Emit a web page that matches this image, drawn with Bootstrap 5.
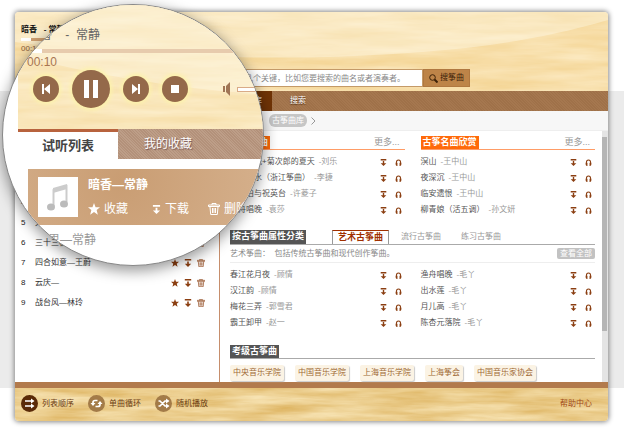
<!DOCTYPE html>
<html lang="zh-CN">
<head>
<meta charset="utf-8">
<meta name="viewport" content="width=device-width, initial-scale=1">
<title>古筝曲库</title>
<link href="https://cdn.jsdelivr.net/npm/bootstrap@5.3.0/dist/css/bootstrap.min.css" rel="stylesheet">
<script src="https://cdn.jsdelivr.net/npm/bootstrap@5.3.0/dist/js/bootstrap.bundle.min.js" defer></script>
<style>
body{font:8px/16px "Liberation Sans","Noto Sans CJK SC",sans-serif;color:#555;background:linear-gradient(#fff 91px,#ebebeb 91px,#ebebeb 388px,#fff 388px)}
a{color:inherit;text-decoration:none}
button{font:inherit;color:inherit;border:0;background:none;padding:0;display:flex;align-items:center}
svg{display:block;flex:none}
ul,h2,p{margin:0;padding:0;list-style:none;font-size:8px}
.app{padding:12px 16px 12px 15px;position:relative}
.win{border-radius:4px;box-shadow:0 0 5px 1px #888;overflow:hidden;background:#fff}
.grain{position:absolute;inset:0;width:100%;height:100%}
.top-wood{height:79px}
.over{position:relative}
.weave{background:repeating-linear-gradient(45deg,#9f7149 0 1px,#a5774f 1px 2px)}
.now{width:204px;padding:10px 6px;line-height:16px;color:#8a5a3a}
.now b{color:#111}
.track{height:3px;background:linear-gradient(90deg,#fff 10px,#d0a070 10px);width:192px}
.find{padding-top:57px}
.find input{width:200px;height:18px;border:1px solid #c49a68;font:inherit;padding:0 5px;border-radius:0;outline:0}
.find input::placeholder{color:#888;opacity:1}
.find button{background:#bd8448;border:1px solid #b07840;height:18px;color:#3d2208;padding:0 5px;gap:2px}
.menu{height:20px;line-height:20px;color:#fff;padding-left:205px}
.menu a{padding:0 18px;text-shadow:0 1px 1px #4a2a10}
.menu a.on{background:#6f3306;padding:0 10px}
.main-area{height:271px}
.side{width:205px;border-right:1px solid #c68e6c;padding:82px 14px 0 6px;color:#333}
.side li{height:20px;line-height:20px;display:flex;align-items:center}
.side li>span:first-child{width:14px;color:#222}
.side .tools{gap:5px}
.crumb{height:20px;background:#f7f7f7;border-bottom:1px solid #eee;padding-left:49px}
.crumb a{background:#c6c6c6;color:#fff;border-radius:6px;line-height:13px;padding:0 3px}
.panel{padding:5px 7px 0 10px}
.cols{display:grid;grid-template-columns:1fr 1fr;column-gap:16px}
.hd{height:14px;line-height:13px;border-bottom:1px solid #ff9c66;display:flex;justify-content:space-between;margin-bottom:4px}
.hd h2{background:#ff6a0a;color:#fff;padding:0 2px;line-height:13px;font-size:9px;font-weight:700}
.hd a{color:#999;padding-right:5px}
.hd .more{font-size:9px}
.hd.dark{border-color:#aaa;justify-content:flex-start;margin-bottom:0}
.hd.dark h2{background:#555}
.hd.dark a{padding:0 10px}
.hd.dark a.on{color:#a03000;font-size:9px;font-weight:700;border:1px solid #999;border-top-color:#a03000;border-bottom:0;background:#fff;height:14px;line-height:12px;padding:0 5px;margin-left:26px;margin-right:2px}
.song{height:16px;display:flex;align-items:center}
.song small{font-size:8px;color:#999;margin-left:4px}
.ic{color:#8b3f12}
.song .acts{margin-left:auto;display:flex;gap:8px;padding-right:3px}
.intro{height:18px;border-bottom:1px solid #eee;display:flex;align-items:center;margin-bottom:4px;color:#888}
.intro a{margin-left:auto;background:#c2c2c2;color:#fff;border-radius:2px;line-height:11px;padding:0 3px}
.tags{display:flex;gap:11px;padding-top:6px}
.tags a{background:#fbf3e4;color:#a06a35;border-radius:2px;box-shadow:1px 1px 1px #ccc;padding:0 3px;line-height:16px}
.levels{margin-top:14px}
.bar{width:6px;background:#e4e4e4;height:251px;padding:6px 1px 0 0}
.bar i{display:block;height:194px;background:#b5b5b5}
.strip{height:6px;background:#b27a4c}
.foot{height:33px;color:#6b3c12}
.foot .over{height:31px;padding:0 16px 0 6px}
.foot button{gap:4px;margin-right:14px}
.foot .help{color:#a04818}
.lens{position:absolute;left:2px;top:4px;width:262px;height:262px;border-radius:50%;overflow:hidden;border:1px solid #888;background:#fff;box-shadow:0 4px 14px 1px rgba(0,0,0,.4)}
.lens-wrap{margin-left:15px;font-size:12px;line-height:16px}
.lens-top{height:124px;padding-top:22px}
.lens-title{padding-left:10px;color:#666}
.lens-track{height:4px;margin-top:6px;background:linear-gradient(90deg,#fff 24px,#e7cbad 24px)}
.lens-time{padding-left:9px;color:#a87552;margin-top:1px}
.ctl{padding:0 0 0 15px;height:38px;gap:13px}
.rd{width:26px;height:26px;flex:none;border-radius:50%;background:#94694a;box-shadow:0 0 4px 2px #fdf3a8;justify-content:center;color:#fff}
.rd.big{width:38px;height:38px}
.speaker{color:#a07555;margin-left:20px}
.vol{width:60px;height:5px;border:1px solid #d9ab88;background:#fff;margin-left:-9px}
.tabs2 button{height:30px;justify-content:center;width:100px}
.tabs2 .on{border-top:3px solid #b8633e;color:#444;font-weight:700;font-size:13px}
.tabs2 .off{flex:1;color:#fff;padding-right:45px;text-shadow:1px 1px 1px #755;background:repeating-linear-gradient(45deg,#b3917a 0 1px,#bd9e88 1px 2px)}
.track-card{margin:10px 0 0 10px;height:56px;background:radial-gradient(circle at 40% 20%,#c99d73,#d5b08c);color:#fff;padding:8px 10px}
.cover{width:40px;height:40px;background:#fff;margin-right:10px}
.track-card button{gap:4px;width:60px;white-space:nowrap;flex:none}
.after{padding:7px 0 0 30px;color:#999}
</style>
</head>
<body>
<svg width="0" height="0" class="position-absolute" aria-hidden="true">
<filter id="wl" x="0" y="0" width="100%" height="100%" color-interpolation-filters="sRGB"><feTurbulence type="fractalNoise" baseFrequency=".01 .09" numOctaves="4" seed="7"/><feColorMatrix values=".05 0 0 0 .945 .13 0 0 0 .805 .28 0 0 0 .52 0 0 0 0 1"/></filter>
<filter id="wd" x="0" y="0" width="100%" height="100%" color-interpolation-filters="sRGB"><feTurbulence type="fractalNoise" baseFrequency=".014 .12" numOctaves="4" seed="3"/><feColorMatrix values=".14 0 0 0 .85 .26 0 0 0 .67 .45 0 0 0 .32 0 0 0 0 1"/></filter>
<symbol id="dl" viewBox="0 0 10 10"><path fill="currentColor" d="M1 0h8v2H1zM4 3h2v3h3L5 10 1 6h3z"/></symbol>
<symbol id="hp" viewBox="0 0 10 10"><path fill="none" stroke="currentColor" stroke-width="1.5" d="M2 7V5a3 3.500 0 0 1 6 0v2"/><path fill="currentColor" d="M1 5.500h2.500V10H2.500L1 8.500zM9 5.500H6.500V10h1L9 8.500z"/></symbol>
<symbol id="st" viewBox="0 0 10 10"><path fill="currentColor" d="M5 0l1.300 3.500H10L7.200 5.900 8.200 9.700 5 7.500 1.800 9.700l1-3.800L0 3.500h3.700z"/></symbol>
<symbol id="tr" viewBox="0 0 12 12"><path fill="none" stroke="currentColor" d="M.5 3.500V2h11v1.500zM4 2V.5h4V2M2 4l.7 7.500h6.600L10 4M4.500 5v5M6 5v5M7.500 5v5"/></symbol>
</svg>
<div class="app">
<div class="win">
  <header class="position-relative top-wood d-flex">
    <svg class="grain" viewBox="0 0 593 79" preserveAspectRatio="none"><rect width="593" height="79" filter="url(#wl)"/><path d="M0 0H593V8C500 35 420 40 340 44S100 45 0 30z" fill="#fffbe8" opacity=".4"/></svg>
    <div class="over now"><b>暗香 &nbsp; - 常静</b><div class="track"></div>00:10</div>
    <form class="over find d-flex flex-grow-1" onsubmit="return false"><input type="text" class="ms-1" aria-label="搜索关键字" placeholder="输入几个关键，比如您要搜索的曲名或者演奏者。"><button type="submit"><svg width="9" height="9" viewBox="0 0 9 9" fill="none" stroke="currentColor"><circle cx="3.500" cy="3.500" r="2.800"/><path stroke-width="2" d="M5.500 5.500 8.500 8.500"/></svg>搜筝曲</button></form>
  </header>
  <nav class="menu weave d-flex"><a class="on" href="#">古筝曲库</a><a href="#">搜索</a></nav>
  <div class="d-flex main-area">
    <aside class="side flex-shrink-0"><ul id="queue"></ul></aside>
    <main class="flex-grow-1">
      <div class="crumb d-flex align-items-center"><a href="#">古筝曲库</a><svg class="ms-1" width="5" height="8" viewBox="0 0 5 8" fill="none" stroke="#999"><path d="M.5.5 4 4 .5 7.500"/></svg></div>
      <div class="d-flex">
        <div class="panel flex-grow-1">
          <div class="cols">
            <section><div class="hd"><h2>推荐筝曲</h2><a class="more" href="#">更多...</a></div><ul data-songs="天空之城+菊次郎的夏天|刘乐;高山流水（浙江筝曲）|李捷;梁山伯与祝英台|许菱子;渔舟唱晚|袁莎"></ul></section>
            <section><div class="hd"><h2>古筝名曲欣赏</h2><a class="more" href="#">更多...</a></div><ul data-songs="溟山|王中山;夜深沉|王中山;临安遗恨|王中山;柳青娘（活五调）|孙文妍"></ul></section>
          </div>
          <div class="hd dark mt-2 pt-1 h-auto"><h2>按古筝曲属性分类</h2><a class="on" href="#">艺术古筝曲</a><a href="#">流行古筝曲</a><a href="#">练习古筝曲</a></div>
          <div class="intro"><span>艺术筝曲：&nbsp; 包括传统古筝曲和现代创作筝曲。</span><a href="#">查看全部</a></div>
          <div class="cols">
            <ul data-songs="春江花月夜|顾情;汉江韵|顾情;梅花三弄|郭雪君;霸王卸甲|赵一"></ul>
            <ul data-songs="渔舟唱晚|毛丫;出水莲|毛丫;月儿高|毛丫;陈杏元落院|毛丫"></ul>
          </div>
          <div class="hd dark levels"><h2>考级古筝曲</h2></div>
          <div class="tags"><a href="#">中央音乐学院</a><a href="#">中国音乐学院</a><a href="#">上海音乐学院</a><a href="#">上海筝会</a><a href="#">中国音乐家协会</a></div>
        </div>
        <div class="bar"><i></i></div>
      </div>
    </main>
  </div>
  <div class="strip"></div>
  <footer class="foot position-relative">
    <svg class="grain"><rect width="100%" height="100%" filter="url(#wd)"/></svg>
    <div class="over d-flex align-items-center">
      <button type="button"><svg width="17" height="17" viewBox="0 0 17 17"><circle cx="8.500" cy="8.500" r="8.500" fill="#5a2a08"/><path d="M4 6h8M4 11h8" stroke="#fff" stroke-width="1.600"/><path d="M10 3.500 13.500 6 10 8.500zM10 8.500 13.500 11 10 13.500z" fill="#fff"/></svg>列表顺序</button>
      <button type="button"><svg width="17" height="17" viewBox="0 0 17 17"><circle cx="8.500" cy="8.500" r="8.500" fill="#a37b48"/><path d="M5 9V7.500a2 2 0 0 1 2-2h2.500M12 8v1.500a2 2 0 0 1-2 2H7.500" fill="none" stroke="#fff" stroke-width="1.700"/><path d="M2.500 8h5L5 11zM14.500 9h-5L12 6z" fill="#fff"/></svg>单曲循环</button>
      <button type="button"><svg width="17" height="17" viewBox="0 0 17 17"><circle cx="8.500" cy="8.500" r="8.500" fill="#a37b48"/><path d="M3.500 6H5l5 5h2M3.500 11H5l5-5h2" fill="none" stroke="#fff" stroke-width="1.700"/><path d="M11 3.500 14.500 6 11 8.500zM11 8.500 14.500 11 11 13.500z" fill="#fff"/></svg>随机播放</button>
      <a class="ms-auto help" href="#">帮助中心</a>
    </div>
  </footer>
</div>
<div class="lens"><div class="lens-wrap">
  <div class="lens-top position-relative">
    <svg class="grain"><rect width="100%" height="100%" filter="url(#wl)"/><rect width="100%" height="100%" fill="#fffbe8" opacity=".3"/><path d="M0 0H250V90Q110 80 0 50z" fill="#fffbe8" opacity=".4"/></svg>
    <div class="over">
      <div class="lens-title">暗香 &nbsp; &nbsp;- &nbsp;常静</div>
      <div class="lens-track"></div>
      <div class="lens-time">00:10</div>
      <div class="ctl d-flex align-items-center">
        <button class="rd" type="button" aria-label="上一首"><svg width="10" height="10" viewBox="0 0 10 10" fill="currentColor"><path d="M1 0h2v10H1zM9 0v10L3 5z"/></svg></button>
        <button class="rd big" type="button" aria-label="暂停"><svg width="16" height="18" viewBox="0 0 16 18" fill="currentColor"><path d="M1 0h5v18H1zM10 0h5v18h-5z"/></svg></button>
        <button class="rd" type="button" aria-label="下一首"><svg width="10" height="10" viewBox="0 0 10 10" fill="currentColor"><path d="M7 0h2v10H7zM1 0v10l6-5z"/></svg></button>
        <button class="rd" type="button" aria-label="停止"><svg width="8" height="8"><rect width="8" height="8" fill="currentColor"/></svg></button>
        <svg class="speaker" width="12" height="16" viewBox="0 0 12 16" fill="currentColor"><path d="M2 5h2v6H2zM5 5l4-4v14l-4-4z"/></svg><div class="vol"></div>
      </div>
    </div>
  </div>
  <div class="tabs2 d-flex"><button type="button" class="on">试听列表</button><button type="button" class="off">我的收藏</button></div>
  <div class="track-card d-flex">
    <div class="cover flex-shrink-0"><svg width="40" height="40" viewBox="0 0 40 40"><path d="M15.500 29V13l13-4v16" fill="none" stroke="#ccc" stroke-width="2"/><path d="M15 11l14-4v5l-14 4z" fill="#ccc"/><ellipse cx="13" cy="30" rx="4" ry="3.500" fill="#bbb"/><ellipse cx="26" cy="27" rx="4" ry="3.500" fill="#bbb"/></svg></div>
    <div><b>暗香—常静</b><div class="d-flex pt-2"><button type="button"><svg width="12" height="12"><use href="#st"/></svg>收藏</button><button type="button"><svg class="ms-1" width="9" height="11"><use href="#dl"/></svg>下载</button><button type="button"><svg width="12" height="12"><use href="#tr"/></svg>删除</button></div></div>
  </div>
  <div class="after">思—常静</div>
</div></div>
</div>
<script>
const icon=(id,s)=>`<svg width="${s}" height="${s}"><use href="#${id}"/></svg>`;
const act=(label,id,s)=>`<button class="ic" type="button" aria-label="${label}">${icon(id,s)}</button>`;
document.querySelectorAll('[data-songs]').forEach(u=>{
  u.innerHTML=u.dataset.songs.split(';').map(s=>{const [t,a]=s.split('|');
    return `<li class="song"><a href="#">${t}<small>-${a}</small></a><span class="acts">${act('下载','dl',7)}${act('试听','hp',7)}</span></li>`}).join('');
});
document.getElementById('queue').innerHTML=[[4,''],[5,'天'],[6,'三十三板'],[7,'四合如意—王蔚'],[8,'云庆—'],[9,'战台风—林玲']].map(([n,t])=>
  `<li><span>${n}</span><span>${t}</span>${n<6?'':`<span class="tools d-flex ms-auto">${act('收藏','st',8)}${act('下载','dl',8)}${act('删除','tr',8)}</span>`}</li>`).join('');
</script>
</body>
</html>
